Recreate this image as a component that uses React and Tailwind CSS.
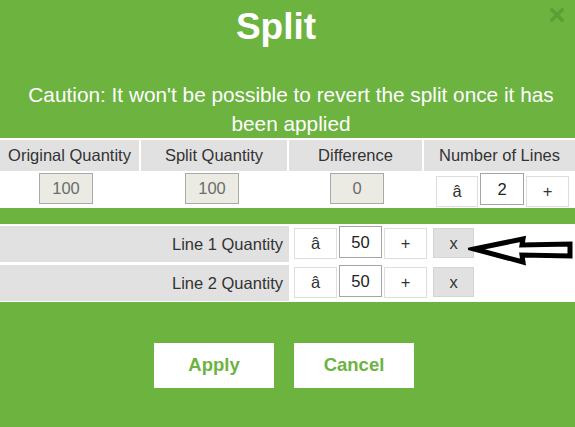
import React, { useState } from 'react';

function StepButton({ children, className = '' }) {
  return (
    <button className={`h-[31px] bg-white border border-[#dedede] text-[16.5px] text-[#333] leading-none flex items-center justify-center ${className}`}>
      {children}
    </button>
  );
}

function LockedBox({ value }) {
  return (
    <div className="w-[54px] h-[31px] bg-[#ebebe4] border border-[#a9a9a9] text-[16.5px] text-[#6d6d6d] flex items-center justify-center">
      {value}
    </div>
  );
}

function QtyBox({ value, className = '' }) {
  return (
    <div className={`h-[32px] bg-white border border-[#a5a5a5] text-[16.5px] text-[#222] flex items-center justify-center ${className}`}>
      {value}
    </div>
  );
}

export default function App() {
  const [lines] = useState([
    { id: 1, qty: 50 },
    { id: 2, qty: 50 },
  ]);

  return (
    <div
      className="relative w-[575px] h-[427px] overflow-hidden bg-[#6cb33f]"
      style={{ fontFamily: '"Liberation Sans", Arial, sans-serif' }}
    >
      {/* close */}
      <button className="absolute left-[550px] top-[8px] w-[14px] h-[14px]">
        <svg viewBox="0 0 14 14" width="14" height="14">
          <path d="M2 2 L12 12 M12 2 L2 12" stroke="#57a035" strokeWidth="3.5" strokeLinecap="square" />
        </svg>
      </button>

      <h1 className="pt-[6px] pr-[23px] text-center text-white font-bold text-[37px] leading-[42px]">Split</h1>

      <p className="mt-[33px] pl-[27px] pr-[20px] text-center text-white text-[20.8px] leading-[28.5px]">
        Caution: It won't be possible to revert the split once it has been applied
      </p>

      {/* summary table */}
      <div className="bg-white pt-[2px]">
        <div className="flex gap-[2px] h-[31px] text-[16.5px] text-[#333]">
          <div className="w-[139px] bg-[#e1e1e1] flex items-center justify-center">Original Quantity</div>
          <div className="w-[146px] bg-[#e1e1e1] flex items-center justify-center">Split Quantity</div>
          <div className="w-[133px] bg-[#e1e1e1] flex items-center justify-center">Difference</div>
          <div className="w-[151px] grow bg-[#e1e1e1] flex items-center justify-center">Number of Lines</div>
        </div>
        <div className="flex gap-[2px] h-[35px] mt-[2px]">
          <div className="w-[139px] pl-[39px] flex items-start">
            <LockedBox value="100" />
          </div>
          <div className="w-[146px] pl-[44px] flex items-start">
            <LockedBox value="100" />
          </div>
          <div className="w-[133px] pl-[41px] flex items-start">
            <LockedBox value="0" />
          </div>
          <div className="w-[151px] grow pl-[12px] flex items-start gap-[2px]">
            <StepButton className="w-[42px] mt-[3px]">â</StepButton>
            <QtyBox value="2" className="w-[44px] h-[31px]" />
            <StepButton className="w-[43px] mt-[3px]">+</StepButton>
          </div>
        </div>
      </div>

      {/* lines table */}
      <div className="relative mt-[16px] bg-white pt-[2px] pb-px flex flex-col gap-[3px]">
        {lines.map((line) => (
          <div key={line.id} className="flex h-[36px] items-start">
            <div className="w-[289px] h-full bg-[#e1e1e1] pr-[6px] flex items-center justify-end text-[16.5px] text-[#333]">
              Line {line.id} Quantity
            </div>
            <div className="ml-[5px] flex items-start gap-[2px]">
              <StepButton className="w-[43px] mt-[2px]">â</StepButton>
              <QtyBox value={line.qty} className="w-[43px]" />
              <StepButton className="w-[43px] mt-[2px]">+</StepButton>
            </div>
            <button className="ml-[6px] mt-[2px] w-[41px] h-[30px] bg-[#e1e1e1] border border-[#d4d4d4] text-[16.5px] text-[#333] flex items-center justify-center">
              x
            </button>
          </div>
        ))}

        {/* annotation arrow */}
        <svg className="absolute left-[468px] top-[10px]" width="107" height="34" viewBox="0 0 107 34">
          <polygon
            points="6,15 55,5 54,11 102,10 102,22 54,21 55,28"
            fill="white"
            stroke="black"
            strokeWidth="5"
            strokeLinejoin="miter"
            strokeMiterlimit="10"
          />
        </svg>
      </div>

      {/* actions */}
      <div className="mt-[41px] pr-[7px] flex justify-center gap-[20px]">
        <button className="w-[120px] h-[45px] bg-white text-[#6cb33f] font-bold text-[18.5px] leading-none">Apply</button>
        <button className="w-[120px] h-[45px] bg-white text-[#6cb33f] font-bold text-[18.5px] leading-none">Cancel</button>
      </div>
    </div>
  );
}
